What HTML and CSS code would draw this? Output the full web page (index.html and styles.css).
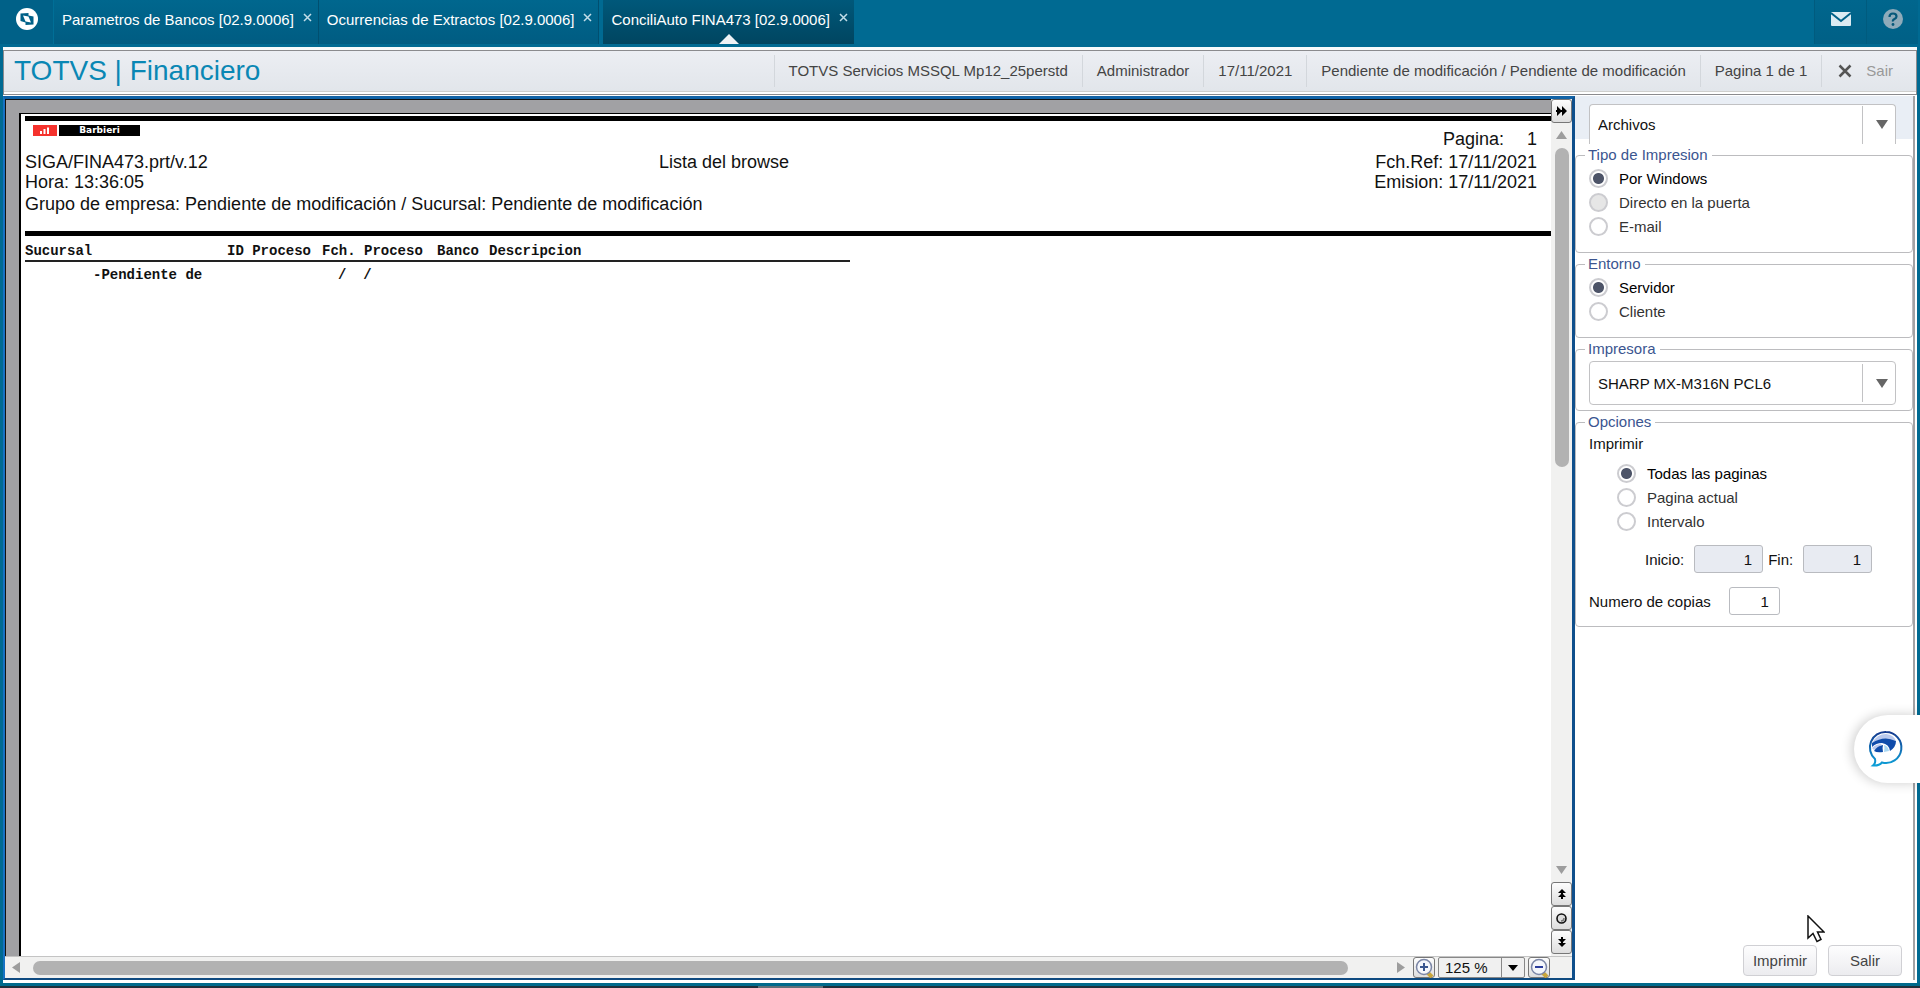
FILE: index.html
```html
<!DOCTYPE html>
<html lang="es">
<head>
    <meta charset="UTF-8">
    <meta name="viewport" content="width=device-width, initial-scale=1.0">
    <title>TOTVS | Financiero</title>
    <link rel="stylesheet" href="styles.css">
</head>
<body>

<!-- Barra superior -->
<nav class="topbar">
    <a class="logo" href="#" aria-label="Inicio">
        <svg width="24" height="24" viewBox="0 0 24 24">
            <circle cx="12" cy="12" r="11" fill="#fff"/>
            <path d="M5.500 6.500L13.500 6V8.500L18.500 9.500V17.500L10.500 18V15.500L5.500 14Z" fill="#006188"/>
            <path d="M8 8.500L13.500 9.500L16 15.500L10.500 14.500Z" fill="#fff"/>
        </svg>
    </a>
    <div class="tab"><a href="#">Parametros de Bancos [02.9.0006]</a><button class="tab-close" aria-label="Cerrar"><svg width="9" height="9" viewBox="0 0 9 9"><path d="M1 1L8 8M8 1L1 8"/></svg></button></div>
    <div class="tab"><a href="#">Ocurrencias de Extractos [02.9.0006]</a><button class="tab-close" aria-label="Cerrar"><svg width="9" height="9" viewBox="0 0 9 9"><path d="M1 1L8 8M8 1L1 8"/></svg></button></div>
    <div class="tab active"><a href="#">ConciliAuto FINA473 [02.9.0006]</a><button class="tab-close" aria-label="Cerrar"><svg width="9" height="9" viewBox="0 0 9 9"><path d="M1 1L8 8M8 1L1 8"/></svg></button></div>
    <div class="tools">
        <button aria-label="Mensajes">
            <svg width="22" height="16" viewBox="0 0 22 16">
                <rect x="1" y="1" width="20" height="14" rx="1" fill="#dcebf2"/>
                <path d="M1 2L11 10L21 2" fill="none" stroke="#006188" stroke-width="2"/>
            </svg>
        </button>
        <button aria-label="Ayuda">
            <svg width="20" height="20" viewBox="0 0 20 20">
                <circle cx="10" cy="10" r="10" fill="#8fabba"/>
                <path d="M6.500 8Q6.500 4.500 10 4.500T13.500 7.500Q13.500 9 11.500 10T10 12.500" fill="none" stroke="#07587a" stroke-width="2.200"/>
                <circle cx="10" cy="15.500" r="1.400" fill="#07587a"/>
            </svg>
        </button>
    </div>
</nav>

<div class="shell">
    <!-- Título y datos de la sesión -->
    <header class="titlebar">
        <h1>TOTVS | Financiero</h1>
        <ul class="session">
            <li>TOTVS Servicios MSSQL Mp12_25perstd</li>
            <li>Administrador</li>
            <li>17/11/2021</li>
            <li>Pendiente de modificación / Pendiente de modificación</li>
            <li>Pagina 1 de 1</li>
            <li><button class="exit"><svg width="14" height="14" viewBox="0 0 14 14"><path d="M1.500 1.500L12.500 12.500M12.500 1.500L1.500 12.500"/></svg>Sair</button></li>
        </ul>
    </header>

    <main class="content">
        <!-- Vista previa del informe -->
        <section class="viewer">
            <div class="canvas">
                <article class="page">
                    <div class="report-head">
                        <div class="brand">
                            <svg class="brand-mark" width="24" height="11" viewBox="0 0 24 11">
                                <rect width="24" height="11" fill="#f5322d"/>
                                <path d="M8 9V6M11.500 9V4M15 9V2.500" stroke="#fff" stroke-width="2"/>
                            </svg>
                            <span class="brand-name">Barbieri</span>
                        </div>
                        <div class="page-no"><span>Pagina:</span><span>1</span></div>
                        <div class="report-id">SIGA/FINA473.prt/v.12<br>Hora: 13:36:05</div>
                        <div class="report-title">Lista del browse</div>
                        <div class="dates">Fch.Ref: 17/11/2021<br>Emision: 17/11/2021</div>
                        <div class="company">Grupo de empresa: Pendiente de modificación / Sucursal: Pendiente de modificación</div>
                    </div>
                    <table class="report">
                        <colgroup>
                            <col class="c-suc"><col class="c-id"><col class="c-fch"><col class="c-ban"><col>
                        </colgroup>
                        <thead>
                            <tr><th>Sucursal</th><th>ID Proceso</th><th>Fch. Proceso</th><th>Banco</th><th>Descripcion</th></tr>
                        </thead>
                        <tbody>
                            <tr><td class="branch">-Pendiente de</td><td></td><td class="blank-date">/ &nbsp;/</td><td></td><td></td></tr>
                        </tbody>
                    </table>
                </article>
            </div>
            <div class="vbar">
                <button class="mini" aria-label="Ocultar panel"><svg width="12" height="10" viewBox="0 0 12 10"><path d="M1 0L6 5L1 10ZM6 0L11 5L6 10Z"/><path d="M0 4H10V6H0Z"/></svg></button>
                <svg class="arrow" width="11" height="8" viewBox="0 0 11 8"><path d="M0 8L5.500 0L11 8Z"/></svg>
                <div class="track"><div class="thumb"></div></div>
                <svg class="arrow" width="11" height="8" viewBox="0 0 11 8"><path d="M0 0L5.500 8L11 0Z"/></svg>
                <button class="mini" aria-label="Pagina anterior"><svg width="10" height="10" viewBox="0 0 10 10"><path d="M5 0L9 4H6V5L9 8H6V10H4V8H1L4 5V4H1Z"/></svg></button>
                <button class="mini" aria-label="Ir a pagina"><svg width="11" height="11" viewBox="0 0 11 11"><circle cx="5.500" cy="5.500" r="4.500" fill="#ddd" stroke="#111" stroke-width="1.600"/><path d="M5 8Q8 8 8 5" fill="none" stroke="#777" stroke-width="1.500"/></svg></button>
                <button class="mini" aria-label="Pagina siguiente"><svg width="10" height="10" viewBox="0 0 10 10"><path d="M5 10L9 6H6V5L9 2H6V0H4V2H1L4 5V6H1Z"/></svg></button>
            </div>
            <div class="hbar">
                <svg class="arrow" width="8" height="11" viewBox="0 0 8 11"><path d="M8 0L0 5.500L8 11Z"/></svg>
                <div class="track"><div class="thumb"></div></div>
                <svg class="arrow" width="8" height="11" viewBox="0 0 8 11"><path d="M0 0L8 5.500L0 11Z"/></svg>
                <div class="zoom">
                    <button class="mini" aria-label="Acercar">
                        <svg width="20" height="20" viewBox="0 0 20 20"><path d="M13 14L18 19" stroke="#c9a63c" stroke-width="4"/><circle cx="10" cy="9" r="7.500" fill="#f4f6fb" stroke="#7b86a6" stroke-width="1.500"/><path d="M6 9H14M10 5V13" stroke="#3a568f" stroke-width="2"/></svg>
                    </button>
                    <select class="zoom-select" aria-label="Zoom"><option>125 %</option></select>
                    <button class="mini" aria-label="Alejar">
                        <svg width="20" height="20" viewBox="0 0 20 20"><path d="M13 14L18 19" stroke="#c9a63c" stroke-width="4"/><circle cx="10" cy="9" r="7.500" fill="#f4f6fb" stroke="#7b86a6" stroke-width="1.500"/><path d="M6 9H14" stroke="#2b3d9c" stroke-width="2"/></svg>
                    </button>
                </div>
            </div>
        </section>

        <!-- Opciones de impresión -->
        <form class="panel">
            <div class="panel-top">
                <select class="combo open" aria-label="Archivos"><option>Archivos</option></select>
            </div>

            <fieldset>
                <legend>Tipo de Impresion</legend>
                <label class="radio"><input type="radio" name="tipo" checked><span>Por Windows</span></label>
                <label class="radio"><input type="radio" name="tipo" disabled><span>Directo en la puerta</span></label>
                <label class="radio"><input type="radio" name="tipo"><span>E-mail</span></label>
            </fieldset>

            <fieldset>
                <legend>Entorno</legend>
                <label class="radio"><input type="radio" name="entorno" checked><span>Servidor</span></label>
                <label class="radio"><input type="radio" name="entorno"><span>Cliente</span></label>
            </fieldset>

            <fieldset class="printer">
                <legend>Impresora</legend>
                <select class="combo" aria-label="Impresora"><option>SHARP MX-M316N PCL6</option></select>
            </fieldset>

            <fieldset class="options">
                <legend>Opciones</legend>
                <p>Imprimir</p>
                <div class="pages">
                    <label class="radio"><input type="radio" name="paginas" checked><span>Todas las paginas</span></label>
                    <label class="radio"><input type="radio" name="paginas"><span>Pagina actual</span></label>
                    <label class="radio"><input type="radio" name="paginas"><span>Intervalo</span></label>
                </div>
                <div class="range">
                    <label for="inicio">Inicio:</label>
                    <input type="text" id="inicio" value="1" disabled>
                    <label for="fin">Fin:</label>
                    <input type="text" id="fin" value="1" disabled>
                </div>
                <div class="copies">
                    <label for="copias">Numero de copias</label>
                    <input type="text" id="copias" value="1">
                </div>
            </fieldset>

            <div class="actions">
                <button type="button">Imprimir</button>
                <button type="button">Salir</button>
            </div>
        </form>
    </main>
</div>

<div class="taskbar"><span></span></div>

<!-- Asistente -->
<button class="chat" aria-label="Asistente">
    <svg width="36" height="38" viewBox="0 0 36 38">
        <defs>
            <linearGradient id="ring" x1="0" y1="0" x2="0" y2="1">
                <stop offset="0" stop-color="#153a8f"/>
                <stop offset="1" stop-color="#0ea0d8"/>
            </linearGradient>
        </defs>
        <path d="M18 2A15.500 15.500 0 1 1 14 32.500Q11 36 5 35.500Q8 33 7 29A15.500 15.500 0 0 1 18 2Z" fill="#fff" stroke="url(#ring)" stroke-width="2"/>
        <path d="M4 13Q9 4 18 4Q26 5 28 11Q18 6 4 13Z" fill="#b9c9ee"/>
        <path d="M4 13Q16 5 28 11Q28 17 22 21Q21 14 14 13Q8 13 4 17Z" fill="#0f4cab"/>
        <path d="M4 18Q8 14 14 14Q11 17 6 20Z" fill="#b9c9ee"/>
        <path d="M6 21Q9 16 15 15Q14 18 15 22Q9 23 6 21Z" fill="#0f4cab"/>
        <path d="M16 15Q20 16 21 21L16 22Q17 18 16 15Z" fill="#a9d7f2"/>
    </svg>
</button>

<svg class="pointer" width="18" height="28" viewBox="0 0 18 28">
    <path d="M1 1V23L6 18.500L10 26.500L14 24.500L10.500 17H17Z" fill="#fff" stroke="#111" stroke-width="1.500"/>
</svg>

</body>
</html>
```
FILE: styles.css
```css
* {
    box-sizing: border-box;
}
body {
    margin: 0;
    height: 100vh;
    display: flex;
    flex-direction: column;
    overflow: hidden;
    background-color: #006a92;
    font-family: "Liberation Sans", Arial, sans-serif;
    font-size: 15px;
    color: #111;
}
button, input, select {
    font: inherit;
    color: inherit;
    margin: 0;
}
button {
    padding: 0;
    border: none;
    background: none;
    cursor: pointer;
}
svg {
    display: block;
}

/* Barra superior */
.topbar {
    display: flex;
    height: 47px;
    padding-bottom: 3px;
    flex-shrink: 0;
}
.logo {
    display: flex;
    justify-content: center;
    width: 54px;
    padding-top: 7px;
    border-right: 1px solid #006f97;
    background-color: #006188;
}
.tab {
    position: relative;
    display: flex;
    align-items: center;
    gap: 9px;
    padding: 0 6px 6px 8px;
    border-right: 1px solid #004f70;
    background: linear-gradient(#00678e, #005c82);
}
.tab a {
    color: #fff;
    text-decoration: none;
    white-space: nowrap;
}
.tab-close {
    padding-bottom: 3px;
    stroke: #c2dde8;
    stroke-width: 1.5;
}
.tab.active {
    margin-left: 4px;
    background: linear-gradient(#00587a, #004560);
    border-right: none;
}
.tab.active::after {
    content: "";
    position: absolute;
    left: 50%;
    bottom: 0;
    margin-left: -10px;
    border: 10px solid transparent;
    border-top: none;
    border-bottom-color: #eef2f5;
}
.tools {
    display: flex;
    margin-left: auto;
    margin-right: 2px;
    background: linear-gradient(#00668d, #006086);
}
.tools button {
    display: flex;
    justify-content: center;
    align-items: center;
    width: 52px;
    padding-bottom: 6px;
    border-left: 1px solid #005b7e;
}

/* Marco */
.shell {
    flex: 1;
    min-height: 0;
    display: flex;
    flex-direction: column;
    margin: 0 3px;
    background-color: #fff;
    border-top: 3px solid #f7fafb;
}
.titlebar {
    display: flex;
    align-items: center;
    height: 45px;
    flex-shrink: 0;
    padding: 0 23px 4px 10px;
    border: 1px solid #8b8b8e;
    background: linear-gradient(#eceef3, #e1e5ea);
    box-shadow: inset 0 -2px #fff, inset 0 -3px #cfcfcd;
}
.titlebar h1 {
    margin: 0;
    font-size: 28px;
    font-weight: normal;
    line-height: 36px;
    color: #0a87b4;
    white-space: nowrap;
}
.session {
    display: flex;
    margin: 0 0 0 auto;
    padding: 0;
    list-style: none;
    color: #444;
    white-space: nowrap;
}
.session li {
    padding: 0 14px;
    line-height: 32px;
    border-left: 1px solid #d3d7dc;
}
.session li:last-child {
    padding-right: 0;
}
.exit {
    display: flex;
    align-items: center;
    gap: 14px;
    padding-left: 2px;
    line-height: 32px;
    color: #999;
    stroke: #555;
    stroke-width: 2.5;
}
.content {
    flex: 1;
    min-height: 0;
    display: grid;
    grid-template-columns: 1fr 342px;
    padding: 1px 0 3px;
}

/* Visor */
.viewer {
    display: grid;
    grid-template-columns: 1fr 21px;
    grid-template-rows: 1fr 22px;
    min-height: 0;
    border: solid;
    border-width: 3px 3px 2px 2px;
    border-color: #1263a6 #0f4f8c #0f4a80 #1672c4;
    background-color: #f1f1f0;
}
.canvas {
    display: flex;
    min-height: 0;
    overflow: hidden;
    padding: 13px 0 0 13px;
    border: 1px solid #111;
    border-right: none;
    border-bottom: none;
    background-color: #a1a1a4;
}
.page {
    flex: 1;
    padding: 2px 0 0 4px;
    border-left: 2px solid #000;
    border-top: 1px solid #000;
    background-color: #fff;
}
.report-head {
    display: grid;
    grid-template-columns: 634px auto 1fr;
    grid-template-rows: 31px 40px 42px;
    padding-right: 14px;
    border-top: 5px solid #000;
    border-bottom: 5px solid #000;
    font-size: 18px;
    line-height: 20px;
    white-space: nowrap;
    height: 120px;
}
.brand {
    display: flex;
    gap: 2px;
    padding: 4px 0 0 8px;
}
.brand-name {
    width: 81px;
    height: 11px;
    background-color: #000;
    color: #fff;
    font-family: "DejaVu Sans", sans-serif;
    font-size: 9px;
    font-weight: bold;
    line-height: 11px;
    text-align: center;
}
.page-no {
    grid-column: 2 / 4;
    display: flex;
    justify-content: flex-end;
    gap: 23px;
    padding-top: 8px;
}
.dates {
    text-align: right;
}
.company {
    grid-column: 1 / 4;
    padding-top: 2px;
}
.report {
    width: 825px;
    table-layout: fixed;
    border-collapse: collapse;
    font-family: "Liberation Mono", "Courier New", monospace;
    font-size: 14px;
    line-height: 16px;
    font-weight: bold;
    text-align: left;
    white-space: nowrap;
}
.report th {
    padding: 7px 0 1px;
    border-bottom: 2px solid #222;
}
.report td {
    padding: 5px 0 0;
}
.report .branch {
    padding-left: 68px;
}
.report .blank-date {
    padding-left: 16px;
}
.c-suc {
    width: 202px;
}
.c-id {
    width: 95px;
}
.c-fch {
    width: 115px;
}
.c-ban {
    width: 52px;
}
.arrow {
    fill: #9d9d9d;
    flex-shrink: 0;
}
.track {
    flex: 1;
    display: flex;
}
.thumb {
    border-radius: 7px;
    background-color: #b2b2b2;
}
.vbar {
    display: flex;
    flex-direction: column;
    align-items: center;
    padding-bottom: 2px;
}
.vbar .track {
    margin: 9px 0 10px;
}
.vbar .thumb {
    width: 14px;
    height: 45%;
}
.vbar .mini:first-child {
    margin-bottom: 8px;
}
.vbar .arrow + .mini {
    margin-top: 8px;
}
.mini {
    display: flex;
    justify-content: center;
    align-items: center;
    flex-shrink: 0;
    width: 22px;
    border: 1px solid #777;
    border-radius: 3px;
    background: linear-gradient(#fdfdfd, #dedede);
}
.vbar .mini {
    width: 21px;
    height: 24px;
}
.hbar {
    grid-column: 1 / 3;
    display: flex;
    align-items: center;
    padding-left: 7px;
    padding-right: 22px;
    border-top: 1px solid #c4c4c4;
}
.hbar .track {
    margin: 0 8px 0 13px;
}
.hbar .thumb {
    width: 97%;
    height: 14px;
}
.hbar .mini {
    height: 21px;
}
.zoom {
    display: flex;
    gap: 3px;
    margin-left: 8px;
}
.zoom-select {
    appearance: none;
    width: 87px;
    height: 21px;
    padding: 0 6px;
    border: 1px solid #888;
    border-radius: 2px;
    background:
        url("data:image/svg+xml,%3Csvg xmlns='http://www.w3.org/2000/svg' width='10' height='6'%3E%3Cpath d='M0 0H10L5 6Z'/%3E%3C/svg%3E") right 6px center no-repeat,
        linear-gradient(#888, #888) right 22px center / 1px 100% no-repeat,
        #f0f0f0;
}

/* Panel de impresión */
.panel {
    display: flex;
    flex-direction: column;
    gap: 2px;
    margin-right: 2px;
    padding-bottom: 4px;
    border-right: 2px solid #a3a3a6;
    background: linear-gradient(#e9eef5 43px, #fff 43px);
}
.panel-top {
    padding: 8px 17px 0 14px;
    height: 48px;
}
.combo {
    appearance: none;
    display: block;
    width: 100%;
    height: 44px;
    padding: 0 8px;
    border: 1px solid #c2c2c4;
    border-radius: 4px;
    background:
        url("data:image/svg+xml,%3Csvg xmlns='http://www.w3.org/2000/svg' width='12' height='9'%3E%3Cpath d='M0 0H12L6 9Z' fill='%23666'/%3E%3C/svg%3E") right 7px center no-repeat,
        linear-gradient(#c2c2c4, #c2c2c4) right 32px center / 1px 38px no-repeat,
        #fff;
}
.combo.open {
    height: 40px;
    border-bottom: none;
    border-radius: 4px 4px 0 0;
}
fieldset {
    min-width: 0;
    margin: 0;
    padding: 2px 13px 14px;
    border: 1px solid #bcbcbf;
    border-radius: 4px;
}
legend {
    margin-left: -4px;
    padding: 0 4px 0 3px;
    line-height: 18px;
    color: #3b5590;
}
.radio {
    display: flex;
    align-items: center;
    gap: 11px;
    height: 24px;
    color: #333;
}
.radio:has(input:checked) {
    color: #000;
}
.radio input {
    appearance: none;
    width: 19px;
    height: 19px;
    border: 2px solid #ccccd0;
    border-radius: 50%;
    background-color: #fff;
}
.radio input:checked {
    background: radial-gradient(circle, #4d5468 5px, #fff 6px);
}
.radio input:disabled {
    background-color: #e6e6e6;
}
.printer {
    padding: 3px 16px 5px 13px;
}
.options {
    padding-bottom: 11px;
}
.options p {
    margin: 0 0 6px;
    line-height: 22px;
}
.pages {
    padding-left: 28px;
}
.range, .copies {
    display: flex;
    align-items: center;
}
.range {
    margin-top: 12px;
    padding-left: 56px;
}
.copies {
    margin-top: 14px;
}
.range input, .copies input {
    width: 69px;
    height: 28px;
    padding: 0 10px;
    border: 1px solid #b9bbc0;
    border-radius: 3px;
    background-color: #fff;
    text-align: right;
}
.range input {
    margin: 0 5px 0 10px;
    background-color: #e8ebf2;
}
.copies input {
    width: 51px;
    margin-left: 18px;
}
.actions {
    display: flex;
    justify-content: flex-end;
    gap: 11px;
    margin-top: auto;
    padding-right: 11px;
}
.actions button {
    width: 74px;
    height: 31px;
    border: 1px solid #d0d0d4;
    border-radius: 4px;
    background: linear-gradient(#fdfdfe, #ececef);
    color: #444;
}

.taskbar {
    height: 5px;
    flex-shrink: 0;
    border-top: 3px solid #006a8c;
    background-color: #20303c;
}
.taskbar span {
    display: block;
    width: 65px;
    height: 2px;
    margin-left: 758px;
    background-color: #5f6f78;
}

/* Elementos flotantes */
.chat {
    position: fixed;
    right: 0;
    top: 715px;
    display: flex;
    align-items: center;
    width: 66px;
    height: 68px;
    padding-left: 14px;
    border-radius: 34px 0 0 34px;
    background-color: #fff;
    box-shadow: -2px 0 12px rgba(0, 0, 0, 0.2);
}
.pointer {
    position: fixed;
    left: 1807px;
    top: 915px;
}
```
